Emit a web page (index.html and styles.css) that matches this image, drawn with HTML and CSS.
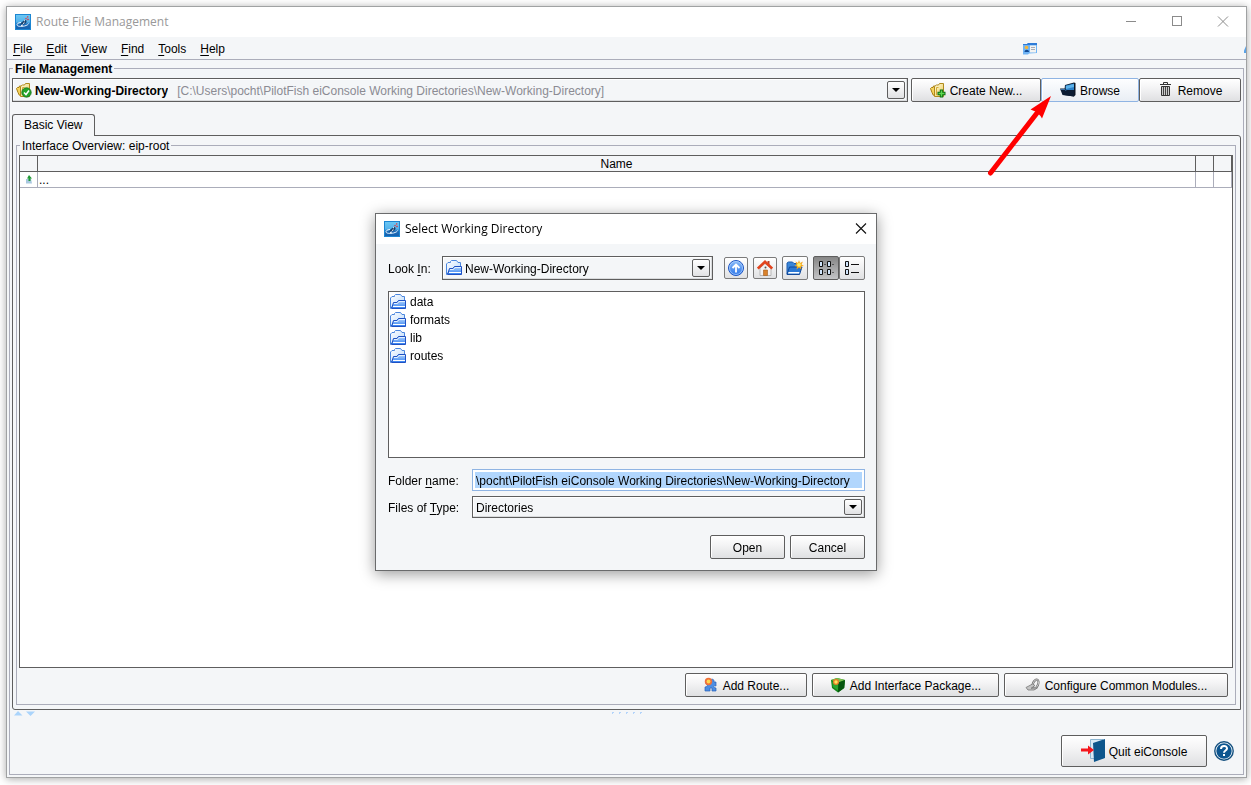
FILE: index.html
```html
<!DOCTYPE html>
<html lang="en">
<head>
<meta charset="utf-8">
<title>Route File Management</title>
<link rel="stylesheet" href="styles.css">
</head>
<body>
<svg class="defs" aria-hidden="true">
  <defs>
    <linearGradient id="gApp" x1="0" y1="0" x2="0" y2="1"><stop offset="0" stop-color="#6cc8f4"/><stop offset=".5" stop-color="#55b2ea"/><stop offset=".65" stop-color="#1c6cb8"/><stop offset="1" stop-color="#1560ae"/></linearGradient>
    <linearGradient id="gFold" x1="0" y1="0" x2="0" y2="1"><stop offset="0" stop-color="#b4d6fc"/><stop offset="1" stop-color="#2f7df0"/></linearGradient>
    <linearGradient id="gBack" x1="0" y1="0" x2="1" y2="1"><stop offset="0" stop-color="#fff"/><stop offset="1" stop-color="#b8d7fa"/></linearGradient>
    <linearGradient id="gUp" x1="0" y1="0" x2="0" y2="1"><stop offset="0" stop-color="#8bbcf8"/><stop offset="1" stop-color="#2c76ea"/></linearGradient>
    <linearGradient id="gGold" x1="0" y1="0" x2="1" y2="1"><stop offset="0" stop-color="#fffbe0"/><stop offset="1" stop-color="#eccb58"/></linearGradient>
    <symbol id="app" viewBox="0 0 16 16">
      <rect x=".5" y=".5" width="15" height="15" fill="url(#gApp)" stroke="#1c86d2"/>
      <path d="M6 8.500C3 8.500 1.800 10 2 11c.5 1.600 4 1.700 7.500 1 2.500-.6 3.800-1.500 4-2.500" fill="none" stroke="#e6f4ff"/>
      <path d="M5 10.500c1.500-2.500 3.500-4 5.500-4.500 1.500.5 1.500 2-.2 3.500-1.300 1-3 1.300-5.300 1z" fill="#17406f"/>
      <path d="M6 11.500l2-.5M8 9.500l1.500-.7M9 6.500l1 .5" stroke="#fff" fill="none"/>
      <path d="M10.500 5l1-.7M12.500 3.500l.3-1.200M12.500 6l1-1" stroke="#ee2d35" stroke-width="1.300" fill="none"/>
    </symbol>
    <symbol id="folder" viewBox="0 0 16 16">
      <path d="M.5 14.500V4L2 2.500H4.500V1.500L5.500.5H10.500L12 2.500H14.500V7H8z" fill="url(#gBack)" stroke="#4a86de"/>
      <path d="M1.500 14.500L3.500 8.500H7L8.500 6.500H15.500V14.500z" fill="url(#gFold)" stroke="#1f51c4"/>
      <path d="M4 9.500H7.500L9 7.500H15" stroke="#e2f0ff" fill="none"/>
      <path d="M3 12.500h12" stroke="#fff"/>
    </symbol>
    <symbol id="goldFolders" viewBox="0 0 16 16">
      <path d="M.5 6.500l1-1h1.500l.5-1.500 2.500.2 1 9H3.300L2 10.500z" fill="#f6d45c" stroke="#a67c10"/>
      <path d="M4.500 14.500V4.500L6.500 3h2l1-1.500h4V14.500z" fill="url(#gGold)" stroke="#b08a1c"/>
      <path d="M6.500 13V5.500h2" stroke="#d3a937" fill="none"/>
    </symbol>
  </defs>
</svg>

<div class="window">
  <header class="titlebar">
    <svg class="i16"><use href="#app"/></svg>
    <span class="title">Route File Management</span>
    <button class="winbtn" aria-label="Minimize"><svg width="12" height="12"><path d="M1 5.500h10" stroke="#8b8b8b"/></svg></button>
    <button class="winbtn" aria-label="Maximize"><svg width="12" height="12"><rect x="1.500" y=".5" width="9" height="9" fill="none" stroke="#8b8b8b"/></svg></button>
    <button class="winbtn" aria-label="Close"><svg width="12" height="12"><path d="M1 .5l10 10M11 .5l-10 10" stroke="#8b8b8b"/></svg></button>
  </header>

  <nav class="menubar">
    <button><u>F</u>ile</button><button><u>E</u>dit</button><button><u>V</u>iew</button><button><u>F</u>ind</button><button><u>T</u>ools</button><button><u>H</u>elp</button>
    <svg class="card" width="14" height="12" viewBox="0 0 14 12">
      <path d="M0 1h4l1-1h9v10l-8 .5L5 11.500H0z" fill="#6fb4f5"/><path d="M0 1h4l1-1h9v2H0z" fill="#2f7cd8"/>
      <path d="M7 2.500h6V9.500H7z" fill="#f3f3f1"/><path d="M8 4.500h4M8 6.500h4" stroke="#a7adb8"/>
      <circle cx="3.500" cy="4.500" r="1.800" fill="#f5b63a"/><path d="M1.500 9c0-3 4.500-3 4.500 0z" fill="#124a95"/>
    </svg>
    <svg class="edge" width="2" height="7"><path d="M0 4.500L2 0v7H0z" fill="#5aa2e6"/></svg>
  </nav>

  <fieldset class="group main">
    <legend class="strong">File Management</legend>
    <div class="toolbar">
      <div class="combo grow">
        <svg class="i16" viewBox="0 0 16 16"><use href="#goldFolders"/><circle cx="10.500" cy="10.500" r="4.700" fill="#25a52b" stroke="#117018" stroke-width=".8"/><path d="M8 10.500l2 2 3-4" fill="none" stroke="#fff" stroke-width="1.500"/></svg>
        <select class="strong fit" aria-label="Working directory"><option>New-Working-Directory</option></select>
        <span class="path">[C:\Users\pocht\PilotFish eiConsole Working Directories\New-Working-Directory]</span>
        <span class="arrow"></span>
      </div>
      <div class="actions">
        <button class="btn create"><svg class="i16" viewBox="0 0 16 16"><use href="#goldFolders"/><path d="M11.500 7.500v8M7.500 11.500h8" stroke="#0c6d12" stroke-width="3.400"/><path d="M11.500 8.500v6M8.500 11.500h6" stroke="#5fd84f" stroke-width="1.400"/></svg>Create New...</button>
        <button class="btn browse"><svg class="i16" viewBox="0 0 16 16"><path d="M5 3l9-2.500L15.500 1v12L14 14.500 4 13z" fill="#0c1626"/><path d="M5.500 3.500l8.500-2v8H5.500z" fill="#2b7fc6"/><path d="M6 4l8-2v3L6 7z" fill="#5cb2ea"/><path d="M0 6.500h5l1.500 1.500H14v6.500L2.500 13z" fill="#0b1c33"/><path d="M1 7.500h4l1 1.300" stroke="#3a6ea3" fill="none"/></svg>Browse</button>
        <button class="btn remove"><svg class="i16" viewBox="0 0 16 16"><path d="M5.500 2.500V.5h4v2M2 2.500h11" stroke="#333" fill="none"/><path d="M3.500 4.500h8V13.500h-8z" fill="#ccc" stroke="#333"/><path d="M5.500 5v8M7.500 5v8M9.500 5v8" stroke="#444"/></svg>Remove</button>
      </div>
    </div>

    <div class="tabs"><button class="tab">Basic View</button></div>
    <section class="panel">
      <fieldset class="group overview">
        <legend>Interface Overview: eip-root</legend>
        <div class="tablebox">
          <table>
            <colgroup><col class="c18"><col><col class="c18"><col class="c18"></colgroup>
            <thead><tr><th></th><th>Name</th><th></th><th></th></tr></thead>
            <tbody><tr><td class="ico"><svg width="8" height="9" viewBox="0 0 8 9"><path d="M1 4h5l1 4.500H1z" fill="#a9c8e0"/><path d="M4 0l3 3.500H5.500V6h-2V3.500H2z" fill="#1f9a35"/></svg></td><td>...</td><td></td><td></td></tr></tbody>
          </table>
        </div>
        <div class="rowbtns">
          <button class="btn route"><svg class="i16" viewBox="0 0 16 16"><path d="M3 5h4c-1-3 4-4 4-1v1h2v4c-3-1-3 2 0 2v3h-4v-3H7v3H2v-4c3 0 3-3 1-3z" fill="#4d8ee3" stroke="#2a61b8" stroke-width=".7"/><circle cx="5.500" cy="4.500" r="3.700" fill="#f0713b"/><circle cx="5.500" cy="4.500" r="1.900" fill="#ffd84f"/></svg>Add Route...</button>
          <button class="btn package"><svg class="i16" viewBox="0 0 16 16"><path d="M1 3l6-2 8 2-.8 8L8 15.500 2 11z" fill="#128419"/><path d="M1 3l6-2 8 2-6.500 2.500z" fill="#7bbf4e"/><path d="M8.500 5.500L15 3l-.8 8L8 15.500z" fill="#08550f"/><path d="M2 4.500l6 2v7L3 10z" fill="#29a52f"/><circle cx="6" cy="5" r="3" fill="#e97e27"/><circle cx="6" cy="5" r="1.700" fill="#ffe45c"/></svg>Add Interface Package...</button>
          <button class="btn modules"><svg class="i16" viewBox="0 0 16 16"><ellipse cx="10.500" cy="7" rx="2.600" ry="4.600" transform="rotate(22 10.500 7)" fill="none" stroke="#6d6d6d" stroke-width="2.200"/><ellipse cx="10.500" cy="7" rx="2.600" ry="4.600" transform="rotate(22 10.500 7)" fill="none" stroke="#d9d9d9" stroke-width=".8"/><path d="M1 10.500L7.500 7l2.500 1.500-4 2.800 6.500-.5L9 13H3z" fill="#c4c4c4" stroke="#777" stroke-width=".8"/></svg>Configure Common Modules...</button>
        </div>
      </fieldset>
    </section>

    <div class="splitter">
      <svg width="21" height="5"><path d="M4 0L8.500 4.500H0zM12 .5h9L16.500 5z" fill="#aad4fb"/></svg>
      <svg width="31" height="3" fill="#b4d4fa"><path d="M0 0h2v1H1v1H0zM7 0h2v1H8v1H7zM14 0h2v1h-1v1h-1zM21 0h2v1h-1v1h-1zM28 0h2v1h-1v1h-1z"/></svg>
      <span></span>
    </div>

    <footer class="footer">
      <button class="btn quit"><svg width="24" height="24" viewBox="0 0 24 24"><path d="M9.500.5H22v19H9.500z" fill="#d8eaf6" stroke="#8cb6d2"/><path d="M12 4l12-4v19l-11 4z" fill="#0d568c"/><path d="M0 9.500h7V6.500l6 4.500-6 4.500v-3H0z" fill="#f5151b"/></svg>Quit eiConsole</button>
      <button class="help" aria-label="Help"><svg width="20" height="20" viewBox="0 0 20 20"><circle cx="10" cy="10" r="9.200" fill="#fff" stroke="#14507f" stroke-width="1.400"/><circle cx="10" cy="10" r="7.700" fill="#0d5690"/><path d="M7 8c0-4 6-4 6-.5 0 2-3 2-3 4.200" fill="none" stroke="#fff" stroke-width="2"/><path d="M9 13h2v2H9z" fill="#fff"/></svg></button>
    </footer>
  </fieldset>

  <svg class="pointer" width="64" height="80" viewBox="0 0 64 80"><path d="M2.500 77L49 17" stroke="#f00" stroke-width="5" stroke-linecap="round"/><path d="M63 0L42.500 13.500l6 2.500 4 4 1.500 2.500z" fill="#f00"/></svg>
</div>

<div class="layer">
  <div class="dialog" role="dialog" aria-labelledby="dlgTitle">
    <header class="titlebar">
      <svg class="i16"><use href="#app"/></svg>
      <span class="title" id="dlgTitle">Select Working Directory</span>
      <button class="close" aria-label="Close"><svg width="12" height="12"><path d="M1 .5l10 10M11 .5l-10 10" stroke="#111" stroke-width="1.100"/></svg></button>
    </header>
    <div class="body">
      <div class="lookin">
        <label for="look">Look <u>I</u>n:</label>
        <div class="combo grow">
          <svg class="i16"><use href="#folder"/></svg>
          <select id="look" class="grow"><option>New-Working-Directory</option></select>
          <span class="arrow"></span>
        </div>
        <div class="tools">
          <button class="tool" aria-label="Up one level"><svg class="i16" viewBox="0 0 16 16"><circle cx="8" cy="8" r="7.500" fill="url(#gUp)" stroke="#1d55c4"/><circle cx="8" cy="8" r="6.500" fill="none" stroke="#b9d8ff" stroke-width=".7"/><path d="M8 12.500V5M4.500 8L8 4.500 11.500 8" fill="none" stroke="#fff" stroke-width="1.800"/></svg></button>
          <button class="tool" aria-label="Home"><svg class="i16" viewBox="0 0 16 16"><path d="M3 8v7.500h11V8L8 3.500z" fill="#f4f2f2" stroke="#aaa" stroke-width=".8"/><path d="M10.500 1h2v4h-2z" fill="#b9402a"/><path d="M.8 8.500L8 1.800l7.200 6.700" fill="none" stroke="#e2431d" stroke-width="2.600"/><path d="M6.500 10h4v5.500h-4z" fill="#d9822c" stroke="#a65a15" stroke-width=".6"/><circle cx="8.500" cy="7.500" r="1" fill="#555"/></svg></button>
          <button class="tool wide" aria-label="New folder"><svg width="18" height="16" viewBox="0 0 18 16"><path d="M1 14V3l1.500-1h4L8 3.500h5V7z" fill="#3a86d8" stroke="#1c5bac"/><path d="M1 14.500L3.500 7H16l-2.500 7.500z" fill="#2a78d4" stroke="#12499a"/><path d="M2 13.500h11l.5-1.500H2.500z" fill="#fff"/><path d="M13 0l1 3 3-1.500L15.500 4.500 18 6l-3 .5.500 3L13 7.500 10.500 9.500l.5-3L8.500 6l2-1.500L9.500 1.500 12 3z" fill="#f7a81c"/><circle cx="13" cy="4.800" r="1.900" fill="#fff36b"/></svg></button>
          <div class="pair">
            <button class="tool wide on" aria-label="List view" aria-pressed="true"><svg width="16" height="14" viewBox="0 0 16 14"><path d="M1.500.5h3v5h-3zM9.500.5h3v5h-3zM1.500 8.500h3v5h-3zM9.500 8.500h3v5h-3z" fill="#cfe4fb" stroke="#111"/><path d="M6.500 3.500h1M14.500 3.500h1M6.500 11.500h1M14.500 11.500h1" stroke="#111"/></svg></button>
            <button class="tool wide" aria-label="Details view"><svg width="16" height="14" viewBox="0 0 16 14"><path d="M1.500.5h3v5h-3zM1.500 8.500h3v5h-3z" fill="#cfe4fb" stroke="#111"/><path d="M7 3.500h8M7 11.500h8" stroke="#111"/></svg></button>
          </div>
        </div>
      </div>

      <ul class="files">
        <li><svg class="i16"><use href="#folder"/></svg>data</li>
        <li><svg class="i16"><use href="#folder"/></svg>formats</li>
        <li><svg class="i16"><use href="#folder"/></svg>lib</li>
        <li><svg class="i16"><use href="#folder"/></svg>routes</li>
      </ul>

      <div class="fields">
        <label for="folder-name">Folder <u>n</u>ame:</label>
        <input id="folder-name" class="name" type="text" value="\pocht\PilotFish eiConsole Working Directories\New-Working-Directory">
        <label for="type">Files of <u>T</u>ype:</label>
        <div class="combo">
          <select id="type" class="grow"><option>Directories</option></select>
          <span class="arrow"></span>
        </div>
      </div>

      <div class="confirm">
        <button class="btn">Open</button>
        <button class="btn">Cancel</button>
      </div>
    </div>
  </div>
</div>
</body>
</html>
```

FILE: styles.css
```css
:root {
  --bg: #f4f6f8;
  --dark: #5e5e5e;
  --light: #abadba;
}
* { box-sizing: border-box; }
body {
  margin: 0;
  padding: 6px 4px 7px 6px;
  min-height: 100vh;
  display: flex;
  background: #fff;
  color: #000;
  font: 12px/14px "Liberation Sans", Arial, sans-serif;
}
button, select, input { font: inherit; color: inherit; margin: 0; padding: 0; border: 0; background: none; border-radius: 0; outline: 0; }
svg { flex: none; display: block; }
u { text-underline-offset: 2px; }
.defs { position: absolute; width: 0; height: 0; }
.i16 { width: 16px; height: 16px; }
.strong { font-weight: bold; }
.grow { flex: 1; min-width: 0; }

.window {
  position: relative;
  flex: 1;
  min-width: 0;
  display: flex;
  flex-direction: column;
  background: var(--bg);
  border: 1px solid #a0a2a3;
  box-shadow: 0 1px 8px rgba(0, 0, 0, .35);
}
.titlebar {
  display: flex;
  align-items: center;
  height: 30px;
  padding-left: 8px;
  background: #fff;
  font-family: "Open Sans", "Noto Sans", sans-serif;
}
.title { flex: 1; margin-left: 5px; }
.window > .titlebar { color: #999; }
.winbtn { width: 46px; height: 30px; display: flex; align-items: center; justify-content: center; }

.menubar {
  display: flex;
  align-items: center;
  gap: 14px;
  height: 23px;
  padding: 2px 0 0 6px;
  border-bottom: 1px solid var(--light);
}
.card { margin-left: auto; }
.edge { margin-left: 193px; }

.group { margin: 0; padding: 0; min-width: 0; border: 1px solid var(--light); display: flex; flex-direction: column; }
.group > legend { padding: 0 2px; margin-left: 1px; height: 14px; line-height: 16px; }
.main { flex: 1; margin: 1px 2px 2px; padding: 3px 2px 7px; }

.toolbar { display: flex; gap: 3px; }
.actions { display: flex; }
.combo {
  display: flex;
  align-items: center;
  height: 24px;
  padding: 0 2px 0 3px;
  border: 1px solid var(--dark);
  box-shadow: inset -1px -1px 0 #d9dbdd, inset 1px 1px 0 #fff;
}
.combo select { appearance: none; height: 18px; padding: 2px 0 0 3px; }
.combo .fit { field-sizing: content; flex: none; }
.path { flex: 1; min-width: 0; margin-left: 9px; padding-top: 2px; color: #8b8b93; white-space: nowrap; overflow: hidden; }
.arrow {
  flex: none;
  display: grid;
  place-items: center;
  width: 18px;
  height: 18px;
  border: 1px solid var(--dark);
  border-radius: 2px;
  background: linear-gradient(#fff, #e1e2e4);
  pointer-events: none;
}
.arrow::before { content: ""; border: solid transparent; border-width: 4px 4px 0; border-top-color: #000; }

.btn {
  display: flex;
  align-items: center;
  justify-content: center;
  gap: 4px;
  height: 24px;
  padding-top: 2px;
  border: 1px solid var(--dark);
  border-radius: 2px;
  background: linear-gradient(#fff, #f4f4f5 40%, #dfe0e2);
  box-shadow: inset 1px 1px 0 #fff;
  white-space: nowrap;
}
.btn svg { margin-top: -2px; }
.create { width: 130px; }
.browse { width: 98px; border-color: #8fb4e3; background: linear-gradient(#fdfeff, #e9eef4); }
.remove { width: 102px; }

.tabs { display: flex; margin-top: 12px; }
.tab {
  position: relative;
  height: 22px;
  margin-bottom: -1px;
  padding: 0 12px 1px 11px;
  border: 1px solid var(--dark);
  border-bottom: 0;
  border-radius: 3px 3px 0 0;
  background: var(--bg);
}
.panel { flex: 1; display: flex; padding: 2px 4px 4px 3px; border: 1px solid var(--dark); border-radius: 0 3px 0 3px; }
.overview { flex: 1; padding: 3px 2px 7px; }
.tablebox { flex: 1; border: 1px solid var(--dark); background: #fff; }
table { width: 100%; border-collapse: separate; border-spacing: 0; table-layout: fixed; }
.c18 { width: 18px; }
th, td { height: 16px; padding: 0; border: solid; border-width: 0 1px 1px 0; line-height: 13px; }
th { font-weight: normal; border-color: var(--dark); background: var(--bg); padding-top: 2px; }
td { border-color: var(--light); padding: 2px 0 0 1px; }
td.ico { padding: 0; }
td.ico svg { margin: 0 auto; }
.rowbtns { display: flex; justify-content: flex-end; gap: 5px; margin: 5px 5px 0 0; }
.route { width: 122px; }
.package { width: 187px; }
.modules { width: 224px; }

.splitter { display: grid; grid-template-columns: 1fr auto 1fr; align-items: center; height: 7px; padding-left: 2px; }
.footer { display: flex; justify-content: flex-end; align-items: center; gap: 7px; margin-top: 18px; padding-right: 7px; }
.quit { width: 146px; height: 32px; }

.pointer { position: absolute; top: 89px; right: 194px; overflow: visible; }

.layer {
  position: fixed;
  inset: 0;
  display: grid;
  place-items: center;
  padding: 0 0 1px 1px;
}
.dialog {
  width: 502px;
  background: var(--bg);
  border: 1px solid #6a6b6c;
  box-shadow: 0 3px 14px rgba(0, 0, 0, .4);
}
.close { padding: 9px; }
.body { padding: 12px 11px 11px 12px; }
label { padding-top: 2px; }
.lookin { display: flex; align-items: center; }
.lookin label { width: 54px; }
.tools { display: flex; align-items: center; gap: 5px; margin-left: 11px; }
.pair { display: flex; }
.tool {
  display: flex;
  align-items: center;
  justify-content: center;
  width: 24px;
  height: 22px;
  border: 1px solid #7b7b7b;
  border-radius: 2px;
  background: linear-gradient(#fff, #e0e1e3);
}
.wide { width: 26px; height: 24px; }
.on { background: linear-gradient(#868686, #c3c4c6); border-color: var(--dark); }
.files { list-style: none; margin: 11px 0; padding: 1px; height: 167px; border: 1px solid var(--dark); background: #fff; }
.files li { display: flex; align-items: center; gap: 4px; height: 18px; }
.fields { display: grid; grid-template-columns: 84px 1fr; align-items: center; row-gap: 5px; }
.fields .combo { height: 22px; }
.fields .arrow { height: 16px; }
.fields .combo, .name { min-width: 0; }
.fields select { padding-left: 0; }
.name {
  width: 100%;
  height: 22px;
  padding: 2px 0 0 3px;
  border: 1px solid #8fb4e3;
  background: #b1d6fd;
  box-shadow: inset 0 0 0 2px #fff;
}
.confirm { display: flex; justify-content: flex-end; gap: 5px; margin-top: 17px; }
.confirm .btn { width: 75px; }
.help { display: block; }
```
